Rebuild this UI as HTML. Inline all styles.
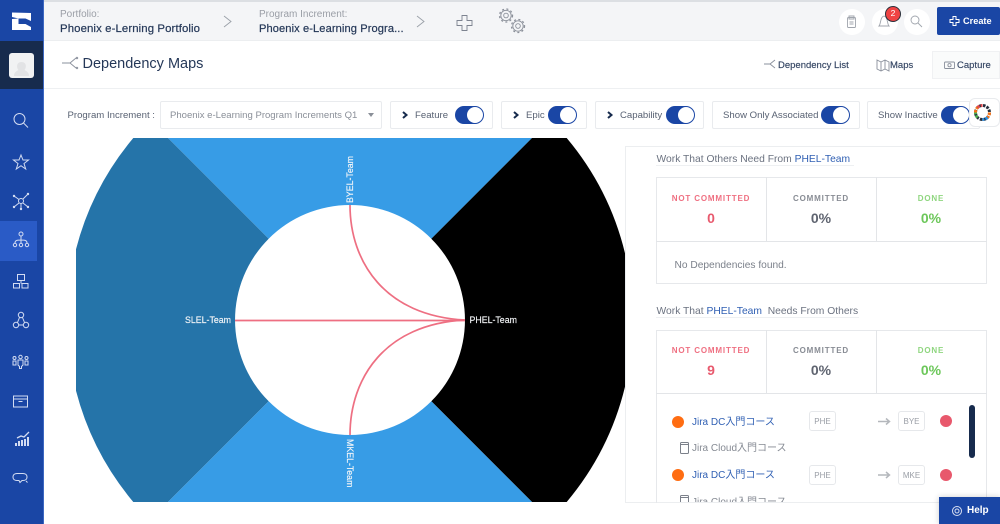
<!DOCTYPE html>
<html><head><meta charset="utf-8"><style>
*{box-sizing:border-box}
html,body{margin:0;padding:0;width:1000px;height:524px;overflow:hidden;background:#fff;font-family:"Liberation Sans","Noto Sans CJK JP",sans-serif}
.a{position:absolute;white-space:nowrap}
svg{position:absolute;overflow:hidden}
.box{position:absolute;top:101px;height:28px;background:#fff;border:1px solid #e9ebee;border-radius:2px}
.t{position:absolute;top:106px;width:29px;height:18px;border-radius:9px;background:#1a46a5;border:1px solid #1a46a5}
.t:after{content:"";position:absolute;right:0;top:0;width:16px;height:16px;border-radius:50%;background:#fff}
.l{position:absolute;font-size:9.6px;color:#596273;top:110px;white-space:nowrap}
.cell{position:absolute;text-align:center;width:110px}
.cap{font-size:8px;font-weight:bold;letter-spacing:.85px;line-height:10px}
.num{font-size:14px;font-weight:bold;line-height:16px;margin-top:6px}
.tag{position:absolute;width:27px;height:20px;border:1px solid #e6e8eb;border-radius:3px;font-size:8px;color:#9a9ea6;text-align:center;line-height:20px}
</style></head><body>

<!-- topbar -->
<div class="a" style="left:44px;top:0;width:956px;height:41px;background:#f4f5f7;border-top:2px solid #dcdfe3;border-bottom:1px solid #eceef0"></div>
<div class="a" style="left:60px;top:9px;font-size:10px;color:#9a9ea6">Portfolio:</div>
<div class="a" style="left:60px;top:23px;font-size:11.4px;color:#253858;letter-spacing:.1px;-webkit-text-stroke:.2px #253858">Phoenix e-Lerning Portfolio</div>
<div class="a" style="left:259px;top:9px;font-size:10px;color:#9a9ea6">Program Increment:</div>
<div class="a" style="left:259px;top:23px;font-size:11.1px;color:#253858;letter-spacing:.1px;-webkit-text-stroke:.2px #253858">Phoenix e-Learning Progra...</div>
<svg style="left:0;top:0" width="1000" height="140" fill="none" stroke="#9aa0a8" stroke-width=".9">
<path d="M224 16l7 5.500-7 5.500M417 16l7 5.500-7 5.500"/>
<path d="M462 15.500h5v5h5v5h-5v5h-5v-5h-5v-5h5z" stroke="#7d8390"/>
<g stroke="#8b909a" stroke-width=".9">
<circle cx="506" cy="15.500" r="5.200"/><circle cx="518" cy="26" r="5.200"/>
<circle cx="506" cy="15.500" r="2.300"/><circle cx="518" cy="26" r="2.300"/>
</g>
<g stroke="#8b909a" stroke-width="1.300" stroke-dasharray="2 2.400">
<circle cx="506" cy="15.500" r="6.500"/><circle cx="518" cy="26" r="6.500"/></g>
</svg>
<div class="a" style="left:839px;top:9px;width:26px;height:26px;border-radius:50%;background:#fff"></div>
<div class="a" style="left:872px;top:9px;width:26px;height:26px;border-radius:50%;background:#fff"></div>
<div class="a" style="left:904px;top:9px;width:26px;height:26px;border-radius:50%;background:#fff"></div>
<svg style="left:0;top:0" width="1000" height="60" fill="none" stroke="#a0a5ad" stroke-width=".9">
<rect x="847.500" y="17.500" width="8" height="10" rx="1"/><path d="M849 16h5v3h-5zM849.500 22h4M849.500 24h4"/>
<path d="M879 26c2-2 1-9 5-10 4 1 3 8 5 10z"/>
<circle cx="915" cy="20" r="4"/><path d="M918 23l4 4"/>
</svg>
<div class="a" style="left:885px;top:6px;width:16px;height:16px;border-radius:50%;background:#ef4444;border:1.500px solid #2a2f3a;color:#fff;font-size:8.500px;text-align:center;line-height:13px">2</div>
<div class="a" style="left:937px;top:7px;width:63px;height:28px;background:#1a46a5;border-radius:2px"></div>
<svg style="left:0;top:0" width="1000" height="40" fill="none" stroke="#fff"><path d="M953 16.500h3v3h3v3h-3v3h-3v-3h-3v-3h3z"/></svg>
<div class="a" style="left:963px;top:15.500px;font-size:9.200px;font-weight:bold;color:#fff">Create</div>

<!-- title row -->
<div class="a" style="left:44px;top:88px;width:956px;height:1px;background:#eef0f2"></div>
<div class="a" style="left:932px;top:51px;width:68px;height:28px;background:#fafbfb;border:1px solid #f0f1f3"></div>
<svg style="left:0;top:0" width="1000" height="90" fill="none" stroke="#8a909c" stroke-width=".9">
<path d="M62 63h8l6-5M70 63l6 5"/><circle cx="77" cy="58" r=".8"/><circle cx="77" cy="68" r=".8"/>
<path d="M764 64h6l5-4M770 64l5 4"/>
<path d="M877 60l4 2 4-2 4 2v9l-4-2-4 2-4-2zM881 62v9M885 60v9"/>
<rect x="944.500" y="62" width="10" height="6.500" rx="1"/><circle cx="949.500" cy="65.200" r="1.600"/>
</svg>
<div class="a" style="left:82.500px;top:55.500px;font-size:14.500px;color:#253858">Dependency Maps</div>
<div class="a" style="left:778px;top:60px;font-size:9.500px;color:#344563;-webkit-text-stroke:.15px #344563">Dependency List</div>
<div class="a" style="left:890px;top:60px;font-size:9.500px;color:#344563;-webkit-text-stroke:.15px #344563">Maps</div>
<div class="a" style="left:957px;top:60px;font-size:9.500px;color:#344563;-webkit-text-stroke:.15px #344563">Capture</div>

<!-- filter row -->
<div class="a" style="left:67.500px;top:110px;font-size:9.600px;color:#596273">Program Increment :</div>
<div class="box" style="left:160px;width:222px"></div>
<div class="a" style="left:170px;top:110px;font-size:9.550px;color:#8a8f98">Phoenix e-Learning Program Increments Q1</div>
<div class="a" style="left:368px;top:113px;width:0;height:0;border-left:3px solid transparent;border-right:3px solid transparent;border-top:4px solid #8a8f98"></div>

<div class="box" style="left:390px;width:103px"></div>
<div class="box" style="left:501px;width:86px"></div>
<div class="box" style="left:595px;width:109px"></div>
<div class="box" style="left:712px;width:148px"></div>
<div class="box" style="left:867px;width:113px"></div>
<svg style="left:0;top:0" width="1000" height="130" fill="none" stroke="#172b4d" stroke-width="2">
<path d="M403 112l3.500 3-3.500 3M514 112l3.500 3-3.500 3M608 112l3.500 3-3.500 3"/></svg>
<div class="l" style="left:415px">Feature</div>
<div class="l" style="left:526px">Epic</div>
<div class="l" style="left:620px">Capability</div>
<div class="l" style="left:723px">Show Only Associated</div>
<div class="l" style="left:878px">Show Inactive</div>
<div class="t" style="left:455px"></div>
<div class="t" style="left:548px"></div>
<div class="t" style="left:666px"></div>
<div class="t" style="left:821px"></div>
<div class="t" style="left:941px"></div>
<div class="a" style="left:969px;top:98px;width:31px;height:29px;background:#fff;border:1px solid #e9ebee;border-radius:6px"></div>
<svg style="left:0;top:0" width="1000" height="130" fill="none" stroke-width="3" stroke-dasharray="2.500 1.200">
<circle cx="982.500" cy="112.500" r="7" stroke="#26303f"/>
<path d="M977.500 107.500a7 7 0 0 1 5-2" stroke="#e5484d"/>
<path d="M975.500 112.500a7 7 0 0 1 2-5" stroke="#f97316"/>
<path d="M977.500 117.500a7 7 0 0 1-2-5" stroke="#4caf50"/>
<path d="M989.500 112.500a7 7 0 0 1-2 5" stroke="#f97316"/>
<path d="M987.500 117.500a7 7 0 0 1-5 2" stroke="#2f8fe0"/>
</svg>

<!-- chart -->
<svg style="left:0;top:0" width="1000" height="524">
<path d="M168 138H532L431.300 238.700A115 115 0 0 0 268.700 238.700Z" fill="#379ce6"/>
<path d="M168 138H133.300A283 283 0 0 0 76 249.200V390.800A283 283 0 0 0 133.300 502H168L268.700 401.300A115 115 0 0 1 268.700 238.700Z" fill="#2574a9"/>
<path d="M532 138H566.700A283 283 0 0 1 625 253.200V386.800A283 283 0 0 1 566.700 502H532L431.300 401.300A115 115 0 0 0 431.300 238.700Z" fill="#000"/>
<path d="M168 502H532L431.300 401.300A115 115 0 0 1 268.700 401.300Z" fill="#379ce6"/>
<g fill="none" stroke="#ee6f82" stroke-width="1.700">
<path d="M350 205C350 262 385 316 465 320"/>
<path d="M235 320.500H465"/>
<path d="M350 435C350 378 385 324 465 320"/>
</g>
<g font-family="Liberation Sans" font-size="8.800" fill="#f4f6f8" stroke="#f4f6f8" stroke-width=".15">
<text x="185" y="323">SLEL-Team</text>
<text x="469.500" y="323">PHEL-Team</text>
<text transform="translate(353,203) rotate(-90)">BYEL-Team</text>
<text transform="translate(347,439) rotate(90)">MKEL-Team</text>
</g>
</svg>

<!-- right panel -->
<div class="a" style="left:625px;top:146px;width:375px;height:357px;border:1px solid #eceef0;border-right:none"></div>
<div class="a" style="left:656.500px;top:154px;font-size:10.300px;color:#6b7280">Work That Others Need From <span style="color:#2f5fb3">PHEL-Team</span></div>
<div class="a" style="left:656px;top:165px;width:198px;height:1px;background:#eef0f2"></div>
<div class="a" style="left:656px;top:177px;width:331px;height:107px;border:1px solid #e6e8eb"></div>
<div class="a" style="left:656px;top:241px;width:331px;height:1px;background:#e3e5e8"></div>
<div class="a" style="left:766px;top:177px;width:1px;height:64px;background:#e3e5e8"></div>
<div class="a" style="left:876px;top:177px;width:1px;height:64px;background:#e3e5e8"></div>
<div class="cell" style="left:656px;top:193.500px"><div class="cap" style="color:#ef7082">NOT COMMITTED</div><div class="num" style="color:#e85a6e">0</div></div>
<div class="cell" style="left:766px;top:193.500px"><div class="cap" style="color:#888c94">COMMITTED</div><div class="num" style="color:#5f6470">0%</div></div>
<div class="cell" style="left:876px;top:193.500px"><div class="cap" style="color:#8fd67f">DONE</div><div class="num" style="color:#6cc75a">0%</div></div>
<div class="a" style="left:674.500px;top:260px;font-size:10.200px;color:#7b808a">No Dependencies found.</div>

<div class="a" style="left:656.500px;top:306px;font-size:10.300px;color:#6b7280">Work That <span style="color:#2f5fb3">PHEL-Team</span> &nbsp;Needs From Others</div>
<div class="a" style="left:656px;top:317px;width:203px;height:1px;background:#eef0f2"></div>
<div class="a" style="left:656px;top:330px;width:331px;height:173px;border:1px solid #e6e8eb;border-bottom:none"></div>
<div class="a" style="left:656px;top:393px;width:331px;height:1px;background:#e3e5e8"></div>
<div class="a" style="left:766px;top:330px;width:1px;height:63px;background:#e3e5e8"></div>
<div class="a" style="left:876px;top:330px;width:1px;height:63px;background:#e3e5e8"></div>
<div class="cell" style="left:656px;top:346px"><div class="cap" style="color:#ef7082">NOT COMMITTED</div><div class="num" style="color:#e85a6e">9</div></div>
<div class="cell" style="left:766px;top:346px"><div class="cap" style="color:#888c94">COMMITTED</div><div class="num" style="color:#5f6470">0%</div></div>
<div class="cell" style="left:876px;top:346px"><div class="cap" style="color:#8fd67f">DONE</div><div class="num" style="color:#6cc75a">0%</div></div>

<div class="a" style="left:672px;top:415.500px;width:12px;height:12px;border-radius:50%;background:#ff6d12"></div>
<div class="a" style="left:692px;top:415.500px;line-height:14px;font-size:10px;color:#2f5fb3">Jira DC入門コース</div>
<div class="tag" style="left:809px;top:411px">PHE</div>
<div class="tag" style="left:898px;top:411px">BYE</div>
<div class="a" style="left:940px;top:415px;width:12px;height:12px;border-radius:50%;background:#e8586c"></div>
<div class="a" style="left:692px;top:442px;line-height:14px;font-size:10px;color:#858a93">Jira Cloud入門コース</div>

<div class="a" style="left:672px;top:469px;width:12px;height:12px;border-radius:50%;background:#ff6d12"></div>
<div class="a" style="left:692px;top:469px;line-height:14px;font-size:10px;color:#2f5fb3">Jira DC入門コース</div>
<div class="tag" style="left:809px;top:465px">PHE</div>
<div class="tag" style="left:898px;top:465px">MKE</div>
<div class="a" style="left:940px;top:469px;width:12px;height:12px;border-radius:50%;background:#e8586c"></div>
<div class="a" style="left:692px;top:496px;width:120px;height:6px;overflow:hidden"><div style="font-size:10px;line-height:14px;color:#858a93">Jira Cloud入門コース</div></div>

<svg style="left:0;top:0" width="1000" height="524" fill="none">
<path d="M878 421.500h11M886 418.500l3.500 3-3.500 3M878 475h11M886 472l3.500 3-3.500 3" stroke="#b4b7bc" stroke-width="1.500"/>
<rect x="680.500" y="442.500" width="8" height="11" rx="1" stroke="#7b808a"/>
<path d="M680.500 444.500h8" stroke="#7b808a"/>
<path d="M680.500 502v-5.500a1 1 0 0 1 1-1h6a1 1 0 0 1 1 1v5.500M680.500 497.500h8" stroke="#7b808a"/>
</svg>
<div class="a" style="left:969px;top:405px;width:6px;height:53px;border-radius:3px;background:#172b4d"></div>

<div class="a" style="left:939px;top:497px;width:61px;height:27px;background:#1a46a5;box-shadow:0 0 6px rgba(0,0,0,.2)"></div>
<svg style="left:0;top:0" width="1000" height="524" fill="none" stroke="#d7def0"><circle cx="957" cy="511" r="4.500"/><circle cx="957" cy="511" r="2"/></svg>
<div class="a" style="left:967px;top:505px;font-size:10px;font-weight:bold;color:#fff">Help</div>

<!-- sidebar -->
<div class="a" style="left:0;top:0;width:44px;height:524px;background:#1a46a5;border-right:1px solid #3d68c2"></div>
<div class="a" style="left:0;top:41px;width:43px;height:48px;background:#172b4d"></div>
<div class="a" style="left:9px;top:53px;width:25px;height:25px;border-radius:3px;background:#f1f2f3"></div>
<svg style="left:0;top:0" width="44" height="524" fill="none" stroke="#d3dcf2" stroke-width="1">
<path d="M12 12.500L31 13V21L25.500 18.500H18.500L12 17zM12 19L18.500 18.500V24H25.500L31 27V30H12z" fill="#fff" stroke="none"/>
<path d="M14 76c0-4 3-5 4.500-6-2-2-2.500-8 3-8s5 6 3 8c1.500 1 4.500 2 4.500 6z" fill="#e2e3e5" stroke="none"/>
</svg>
<div class="a" style="left:0;top:221px;width:37px;height:40px;background:#2a5bc6"></div>
<svg style="left:0;top:0" width="44" height="524" fill="none" stroke="#d3dcf2" stroke-width="1">
<circle cx="19.500" cy="119" r="5.500"/><path d="M23.500 123l4.500 4.500"/>
<path d="M21 155l2 5h5.500l-4.500 3.500 1.700 5.500-4.700-3.300-4.700 3.300 1.700-5.500-4.500-3.500h5.500z"/>
<circle cx="21" cy="201" r="2.500"/><path d="M14 196l5 3.500M28 194l-5 5M14 207l5-4M28 207l-5-4M21 204v5"/>
<g fill="#d3dcf2" stroke="none"><circle cx="14" cy="196" r="1.200"/><circle cx="28" cy="194" r="1.200"/><circle cx="14" cy="207" r="1.200"/><circle cx="28" cy="207" r="1.200"/><circle cx="21" cy="209" r="1.200"/></g>
<circle cx="21" cy="234" r="2"/><circle cx="15" cy="245" r="1.700"/><circle cx="21" cy="245" r="1.700"/><circle cx="27" cy="245" r="1.700"/><path d="M21 236v7M15 243c0-3 3-3 6-3s6 0 6 3"/>
<rect x="17.500" y="274.500" width="7" height="6"/><rect x="13.500" y="283.500" width="6" height="4.500"/><rect x="22" y="283.500" width="6" height="4.500"/><path d="M21 280.500v3"/>
<circle cx="21" cy="315" r="2.700"/><circle cx="16" cy="325" r="2.700"/><circle cx="26" cy="325" r="2.700"/><path d="M19.500 317.500l-2 5M22.500 317.500l2 5M18.500 325h5"/>
<circle cx="20.500" cy="357" r="1.700"/><path d="M18 360h5v5l-1.500 1.500v2h-2v-2l-1.500-1.500z"/>
<circle cx="14.500" cy="358" r="1.500"/><path d="M13 361h3v4h-3z"/><circle cx="26.500" cy="358" r="1.500"/><path d="M25 361h3v4h-3z"/>
<rect x="13.500" y="396" width="14" height="11"/><path d="M13.500 399h14M18.500 401.500h4"/>
<path d="M16 446v-3M19 446v-5M22 446v-6M25 446v-7M28 446v-9" stroke-width="2"/><path d="M17 438l4-2 3 1 5-5" stroke-width="1.300"/>
<path d="M13 477c0-2.500 2-3.500 4-3.500h6c2 0 4 1 4 3.500s-2 3.500-4 3.500h-1l-2 2-1-2h-2c-2 0-4-1-4-3.500zM26 481l1.500 1.500"/>
</svg>

</body></html>
